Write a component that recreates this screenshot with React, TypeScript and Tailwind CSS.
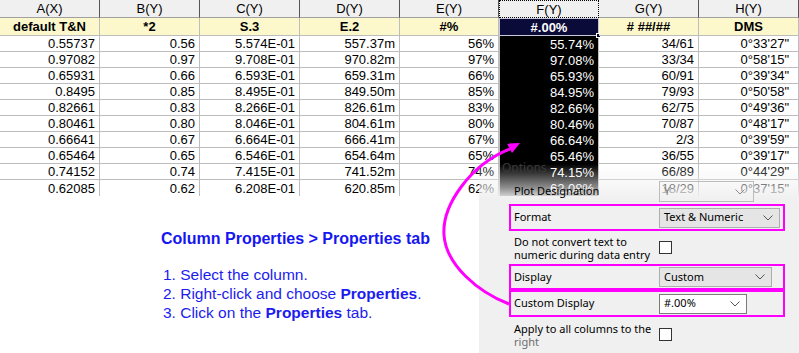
import clsx from "clsx";

type Col = { h: string; ln: string; v: string[] };

const cols: Col[] = [
  { h: "A(X)", ln: "default T&N", v: ["0.55737", "0.97082", "0.65931", "0.8495", "0.82661", "0.80461", "0.66641", "0.65464", "0.74152", "0.62085"] },
  { h: "B(Y)", ln: "*2", v: ["0.56", "0.97", "0.66", "0.85", "0.83", "0.80", "0.67", "0.65", "0.74", "0.62"] },
  { h: "C(Y)", ln: "S.3", v: ["5.574E-01", "9.708E-01", "6.593E-01", "8.495E-01", "8.266E-01", "8.046E-01", "6.664E-01", "6.546E-01", "7.415E-01", "6.208E-01"] },
  { h: "D(Y)", ln: "E.2", v: ["557.37m", "970.82m", "659.31m", "849.50m", "826.61m", "804.61m", "666.41m", "654.64m", "741.52m", "620.85m"] },
  { h: "E(Y)", ln: "#%", v: ["56%", "97%", "66%", "85%", "83%", "80%", "67%", "65%", "74%", "62%"] },
  { h: "F(Y)", ln: "#.00%", v: ["55.74%", "97.08%", "65.93%", "84.95%", "82.66%", "80.46%", "66.64%", "65.46%", "74.15%", "62.08%"] },
  { h: "G(Y)", ln: "# ##/##", v: ["34/61", "33/34", "60/91", "79/93", "62/75", "70/87", "2/3", "36/55", "66/89", "18/29"] },
  { h: "H(Y)", ln: "DMS", v: ["0°33'27\"", "0°58'15\"", "0°39'34\"", "0°50'58\"", "0°49'36\"", "0°48'17\"", "0°39'59\"", "0°39'17\"", "0°44'29\"", "0°37'15\""] },
];

const SEL = 5;

const Chevron = ({ color = "#555" }: { color?: string }) => (
  <svg width="10" height="6" viewBox="0 0 10 6" className="shrink-0">
    <polyline points="0.5,0.5 5,5 9.5,0.5" fill="none" stroke={color} strokeWidth="1" />
  </svg>
);

const Check = () => <div className="h-[13px] w-[13px] shrink-0 border border-[#333] bg-white" />;

function Worksheet() {
  return (
    <div className="grid grid-cols-[100px_100px_100px_100px_99px_100px_100px_100px] font-['Liberation_Sans',Arial,sans-serif] text-[13px] text-black">
      {cols.map((c, i) => (
        <div
          key={c.h}
          className={clsx(
            "flex h-[18px] items-center justify-center bg-[#f0f0f0] leading-[15px]",
            i === SEL ? "border border-dotted border-black" : "border-r border-b border-r-[#555] border-b-[#a0a0a0]"
          )}
        >
          {c.h}
        </div>
      ))}
      {cols.map((c, i) => (
        <div
          key={c.ln}
          className={clsx(
            "relative flex h-[18px] items-center justify-center font-bold leading-[15px]",
            i === SEL
              ? "border border-[#c8c8d8] bg-[#0b0b3a] text-white"
              : "border-r border-b border-[#bdbdbd] bg-[#fdf8cc]"
          )}
        >
          {c.ln}
          {i === SEL && (
            <span className="absolute -right-[3px] -bottom-[3px] h-[5px] w-[5px] border border-white bg-[#0b0b3a]" />
          )}
        </div>
      ))}
      {cols[0].v.map((_, r) =>
        cols.map((c, i) => (
          <div
            key={c.h + r}
            className={clsx(
              "flex h-[16px] items-center justify-end leading-[15px]",
              i === 7 ? "pr-[9px]" : "pr-[4px]",
              i === SEL
                ? "border-x border-[#c0c0c0] bg-black text-white"
                : clsx("border-r border-[#bdbdbd]", r < 9 && "border-b")
            )}
          >
            {c.v[r]}
          </div>
        ))
      )}
    </div>
  );
}

function PropertiesPanel() {
  return (
    <div className="absolute left-[479px] top-[158px] h-[195px] w-[320px] bg-[linear-gradient(to_bottom,rgba(240,240,240,0)_6px,rgba(240,240,240,0.6)_30px,#f0f0f0_42px)] font-['Noto_Sans',sans-serif] text-[11px] whitespace-nowrap text-black">
      <div className="h-[18px] pt-[2px] pl-[23px] text-[12px] leading-[16px] text-[#3a3a3a]">Options</div>
      <div className="ml-[30px] w-[276px]">
        <div className="mt-[5px] flex h-[21px] items-center pl-[5px]">
          <span className="w-[145px]">Plot Designation</span>
          <div className="flex h-[21px] w-[95px] items-center justify-between border border-[#bcbcbc] pl-[4px] pr-[8px] text-[#7a7a7a]">
            <span>Y</span>
            <Chevron color="#8a8a8a" />
          </div>
        </div>
        <div className="mt-[2px] flex h-[27px] items-center border-2 border-[#ff00ff] pl-[3px]">
          <span className="w-[145px]">Format</span>
          <div className="flex h-[20px] w-[121px] items-center justify-between border border-[#adadad] bg-[#e5e5e5] pl-[4px] pr-[6px]">
            <span>Text &amp; Numeric</span>
            <Chevron />
          </div>
        </div>
        <div className="flex h-[33px] items-center pl-[5px]">
          <span className="w-[145px] leading-[13px]">
            Do not convert text to
            <br />
            numeric during data entry
          </span>
          <Check />
        </div>
        <div className="flex h-[26px] items-center border-2 border-[#ff00ff] pl-[3px]">
          <span className="w-[145px]">Display</span>
          <div className="flex h-[20px] w-[113px] items-center justify-between border border-[#adadad] bg-[#e5e5e5] pl-[4px] pr-[6px]">
            <span>Custom</span>
            <Chevron />
          </div>
        </div>
        <div className="flex h-[27px] items-center border-2 border-[#ff00ff] pl-[3px]">
          <span className="w-[145px]">Custom Display</span>
          <div className="flex h-[20px] w-[88px] items-center justify-between border border-[#7a7a7a] bg-white pl-[4px] pr-[6px]">
            <span>#.00%</span>
            <Chevron />
          </div>
        </div>
        <div className="flex h-[35px] items-center pl-[5px]">
          <span className="w-[145px] leading-[13px]">
            Apply to all columns to the
            <br />
            <span className="text-[#6d6d6d]">right</span>
          </span>
          <Check />
        </div>
      </div>
    </div>
  );
}

export default function App() {
  return (
    <div className="relative h-[353px] w-[799px] overflow-hidden bg-white">
      <Worksheet />
      <div className="pt-[35px] pl-[161px] font-['Liberation_Sans',Arial,sans-serif] text-[#1616f0]">
        <div className="text-[16px] leading-[16px] font-bold">Column Properties &gt; Properties tab</div>
        <ol className="mt-[18px] pl-[2px] text-[15.5px] leading-[19px] text-[#1c1cee]">
          <li>1. Select the column.</li>
          <li>
            2. Right-click and choose <b>Properties</b>.
          </li>
          <li>
            3. Click on the <b>Properties</b> tab.
          </li>
        </ol>
      </div>
      <PropertiesPanel />
      <svg className="pointer-events-none absolute left-0 top-0" width="799" height="353">
        <path d="M509,304 C478,292 446,265 444,235 C442,205 470,165 510,149" fill="none" stroke="#ff00ff" strokeWidth="3" />
        <polygon points="520,143 507,143.5 512,153" fill="#ff00ff" />
      </svg>
    </div>
  );
}
